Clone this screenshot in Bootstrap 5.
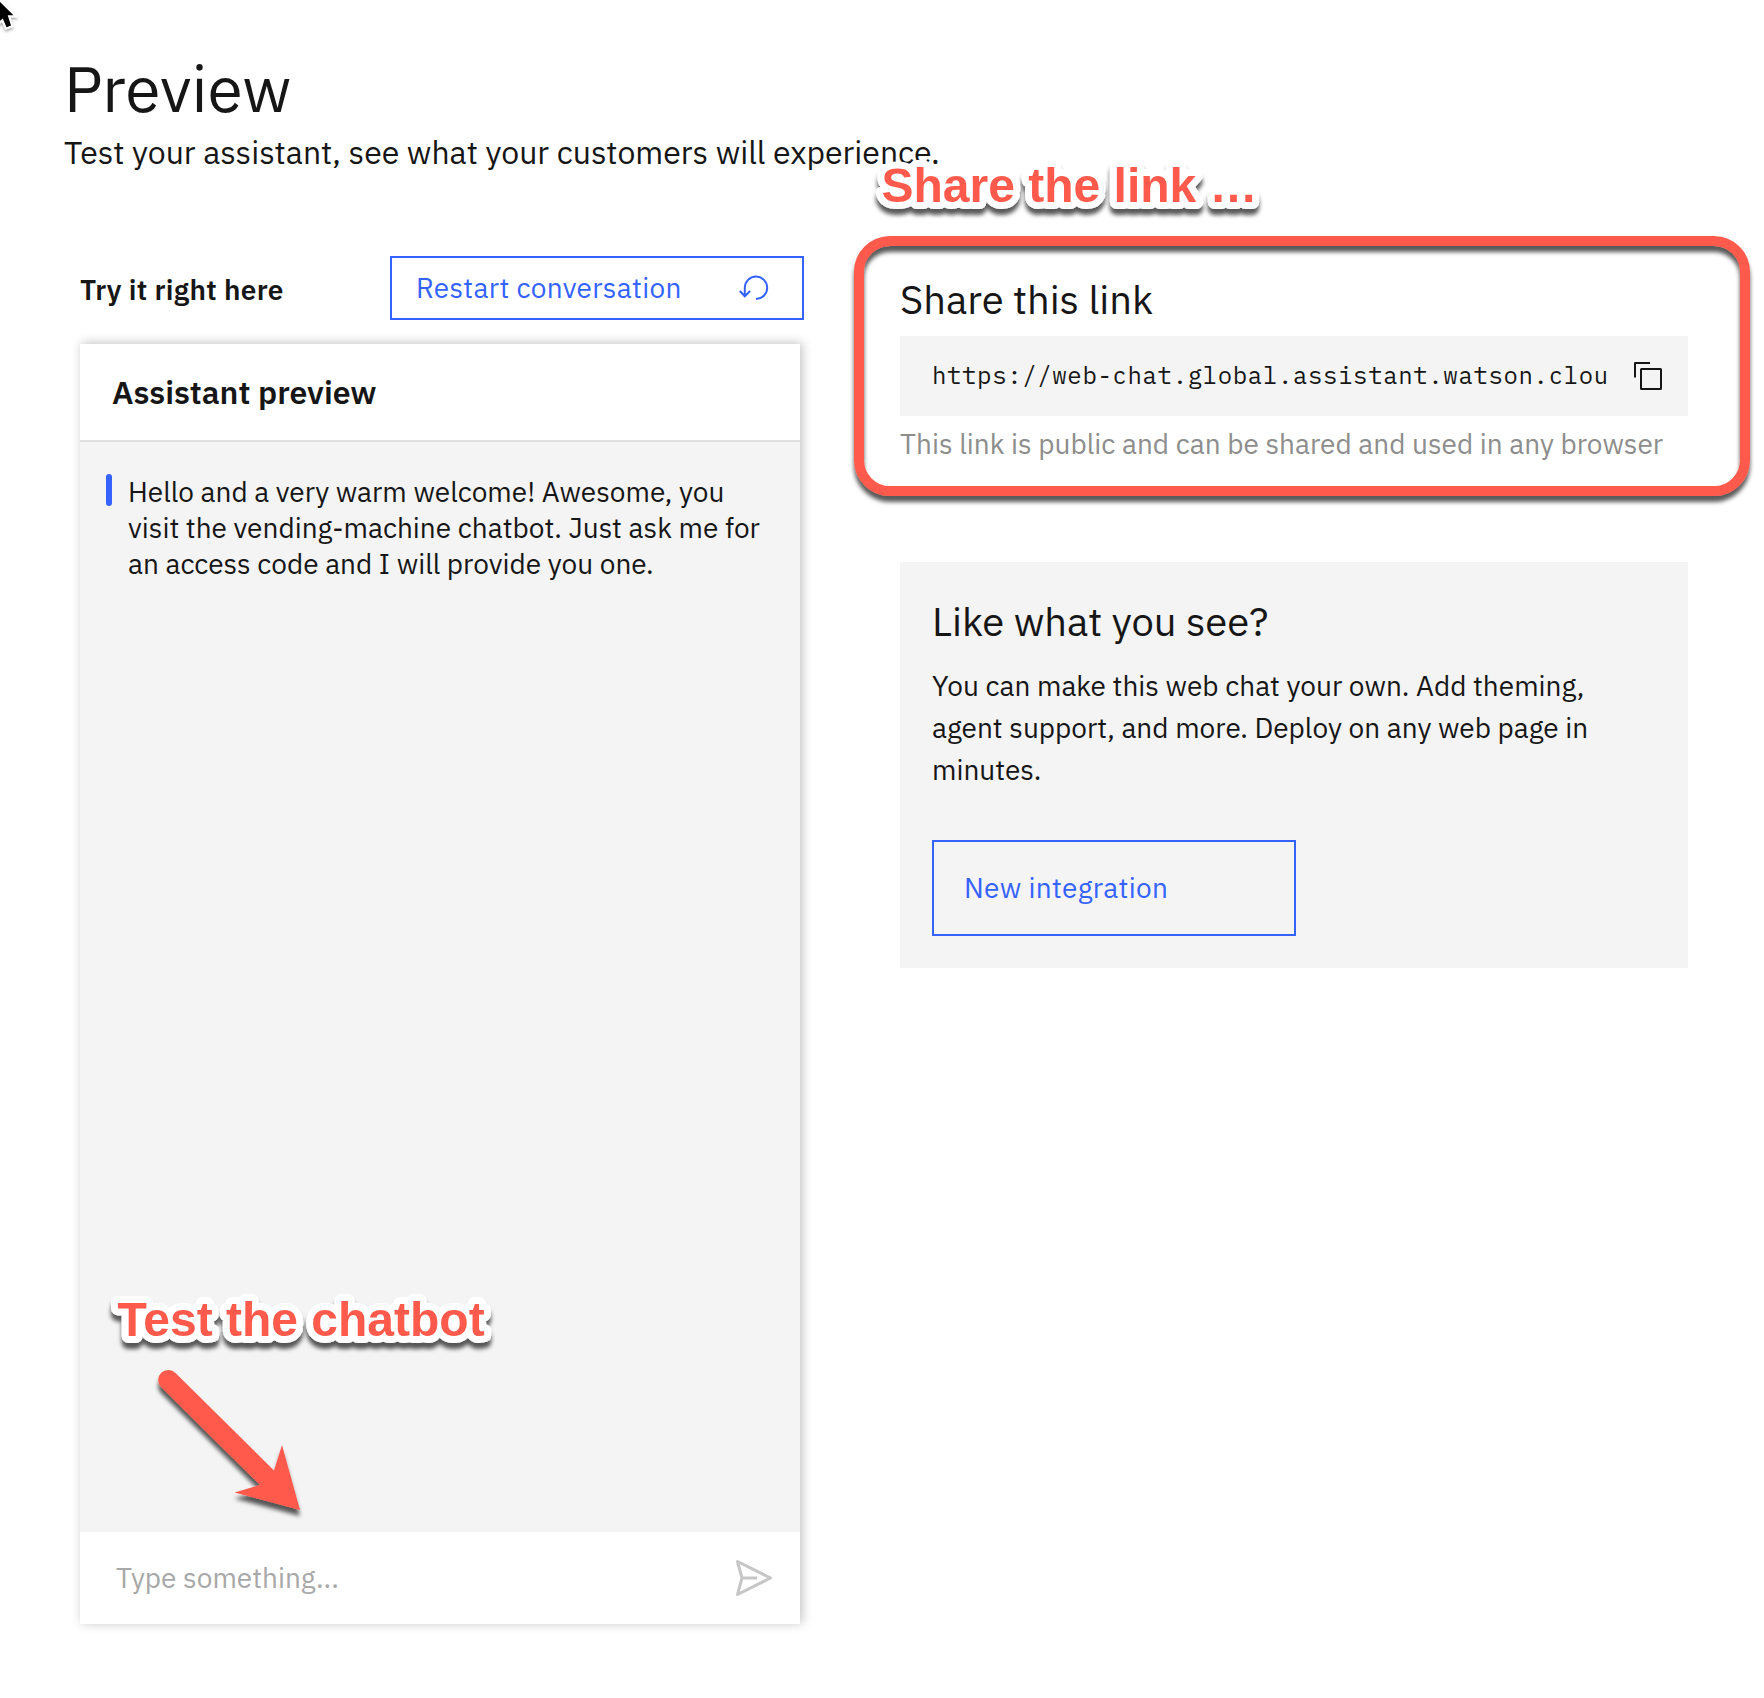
<!DOCTYPE html>
<html lang="en">
<head>
<meta charset="utf-8">
<meta name="viewport" content="width=device-width, initial-scale=1">
<title>Preview</title>
<link href="https://cdn.jsdelivr.net/npm/bootstrap@5.3.0/dist/css/bootstrap.min.css" rel="stylesheet">
<style>
  body { font-family: "IBM Plex Sans", Roboto, "Liberation Sans", sans-serif; color: #161616; font-size: 28px; min-height: 1698px; overflow: hidden; }
  .page-head { padding: 48px 0 0 64px; height: 256px; }
  .page-title { font-size: 64px; line-height: 80px; }
  .page-sub { font-size: 32px; line-height: 40px; margin-top: 4px; }
  .columns { padding-left: 80px; gap: 96px; }
  .try-col { width: 724px; }
  .share-col { width: 788px; padding-top: 19px; }
  .try-title { font-size: 28px; line-height: 36px; font-weight: 600; padding-top: 4px; letter-spacing: .32px; }
  .btn-line { border: 2px solid #3463ff; border-radius: 0; color: #3463ff; font-size: 28px; line-height: 36px; letter-spacing: .32px; text-align: left; }
  .btn-restart { width: 414px; height: 64px; padding: 0 31px 0 24px; }
  .btn-new { width: 364px; height: 96px; padding: 0 30px; margin-top: 49px; }
  .chat-panel { width: 720px; height: 1280px; margin-top: 24px; background: #f4f4f4; box-shadow: 2px -1px 10px rgba(0,0,0,.25); }
  .chat-head { height: 98px; padding-left: 32px; border-bottom: 2px solid #e0e0e0; font-size: 32px; font-weight: 600; }
  .chat-body { padding: 32px 26px; }
  .accent-bar { width: 6px; height: 32px; border-radius: 3px; background: #3463ff; }
  .chat-msg { margin-left: 16px; line-height: 36px; }
  .chat-input { height: 92px; padding: 0 27px 0 36px; color: #a8a8a8; }
  .block-title { font-size: 40px; line-height: 48px; letter-spacing: -.04px; }
  .soft { background: #f4f4f4; }
  .link-box { height: 80px; margin-top: 13px; padding: 0 26px 0 32px; }
  .link-url { font-family: "IBM Plex Mono", "Liberation Mono", monospace; font-size: 24px; letter-spacing: .64px; padding-bottom: 2px; }
  .help-line { color: #8d8d8d; line-height: 36px; margin-top: 10px; }
  .own-card { margin-top: 100px; height: 406px; padding: 35px 32px 32px; }
  .own-text { line-height: 42px; margin-top: 20px; }
  .nowrap-line { white-space: nowrap; display: block; }
  .callout-layer { left: 0; top: 0; pointer-events: none; }
</style>
<script src="https://cdn.jsdelivr.net/npm/bootstrap@5.3.0/dist/js/bootstrap.bundle.min.js"></script>
</head>
<body class="bg-white position-relative">
  <header class="page-head">
    <h1 class="page-title fw-normal mb-0">Preview</h1>
    <p class="page-sub mb-0">Test your assistant, see what your customers will experience.</p>
  </header>

  <main class="columns d-flex align-items-start">
    <section class="try-col">
      <div class="d-flex justify-content-between align-items-center">
        <h2 class="try-title mb-0">Try it right here</h2>
        <button type="button" class="btn btn-line btn-restart d-flex align-items-center justify-content-between">
          <span>Restart conversation</span>
          <svg width="32" height="32" viewBox="0 0 32 32" fill="none" stroke="#3463ff" stroke-width="2" aria-hidden="true"><path d="M17 27A11.2 11.2 0 1 0 5.800 15.800V24.500M.800 19l5 5.300 5.300-5.300"/></svg>
        </button>
      </div>

      <div class="chat-panel d-flex flex-column">
        <div class="chat-head bg-white d-flex align-items-center">Assistant preview</div>
        <div class="chat-body d-flex align-items-start flex-grow-1">
          <div class="accent-bar flex-shrink-0"></div>
          <p class="chat-msg mb-0">
            <span class="nowrap-line">Hello and a very warm welcome! Awesome, you</span>
            <span class="nowrap-line">visit the vending-machine chatbot. Just ask me for</span>
            <span class="nowrap-line">an access code and I will provide you one.</span>
          </p>
        </div>
        <div class="chat-input bg-white d-flex align-items-center justify-content-between">
          <span>Type something...</span>
          <svg width="38" height="38" viewBox="0 0 38 38" fill="none" stroke="#c6c6c6" stroke-width="3" stroke-linejoin="round" aria-hidden="true"><path d="M2.500 2.500L35.500 19 2.500 35.500 7 19zM7 19H22"/></svg>
        </div>
      </div>
    </section>

    <section class="share-col">
      <h2 class="block-title fw-normal mb-0">Share this link</h2>
      <div class="link-box soft d-flex align-items-center justify-content-between">
        <span class="link-url">https://web-chat.global.assistant.watson.clou</span>
        <svg width="28" height="28" viewBox="0 0 28 28" fill="none" stroke="#161616" stroke-width="2" stroke-linejoin="round" aria-hidden="true"><path d="M1 15.500V1H16"/><rect x="7" y="7" width="20" height="20" rx=".5"/></svg>
      </div>
      <p class="help-line mb-0 text-nowrap">This link is public and can be shared and used in any browser</p>

      <div class="own-card soft">
        <h2 class="block-title fw-normal mb-0">Like what you see?</h2>
        <p class="own-text mb-0">
          <span class="nowrap-line">You can make this web chat your own. Add theming,</span>
          <span class="nowrap-line">agent support, and more. Deploy on any web page in</span>
          <span class="nowrap-line">minutes.</span>
        </p>
        <button type="button" class="btn btn-line btn-new">New integration</button>
      </div>
    </section>
  </main>

  <!-- Callouts drawn over the page -->
  <svg class="callout-layer position-absolute" width="1764" height="1698" viewBox="0 0 1764 1698">
    <defs>
      <filter id="drop" filterUnits="userSpaceOnUse" x="0" y="0" width="1764" height="1698"><feDropShadow dx="0" dy="6" stdDeviation="2" flood-color="#000" flood-opacity=".65"/></filter>
      <filter id="cursorDrop" x="-50%" y="-50%" width="200%" height="200%"><feDropShadow dx="0" dy="2" stdDeviation="1.500" flood-color="#000" flood-opacity=".35"/></filter>
    </defs>
    <rect x="859" y="241" width="886" height="250" rx="31" fill="none" stroke="#ff5a4c" stroke-width="10" filter="url(#drop)"/>
    <g font-family="'Liberation Sans', Arial, sans-serif" font-weight="700" font-size="48" fill="#ff5a4c" stroke="#fff" stroke-width="14" stroke-linejoin="round" paint-order="stroke" filter="url(#drop)">
      <text x="881.500" y="202">Share the link …</text>
      <text x="117.500" y="1336">Test the chatbot</text>
    </g>
    <path d="M161 1387A10 10 0 1 1 175.500 1373L274 1470.500 282 1445 300 1510 234.500 1492.500 260 1485z" fill="#ff5a4c" filter="url(#drop)"/>
    <path d="M-6 -4L13.500 15.300H7.700L11 25.600 6.500 27.300 2.800 18.500-6 26z" fill="#000" stroke="#fff" stroke-width="4" stroke-linejoin="miter" paint-order="stroke" filter="url(#cursorDrop)"/>
  </svg>
</body>
</html>
